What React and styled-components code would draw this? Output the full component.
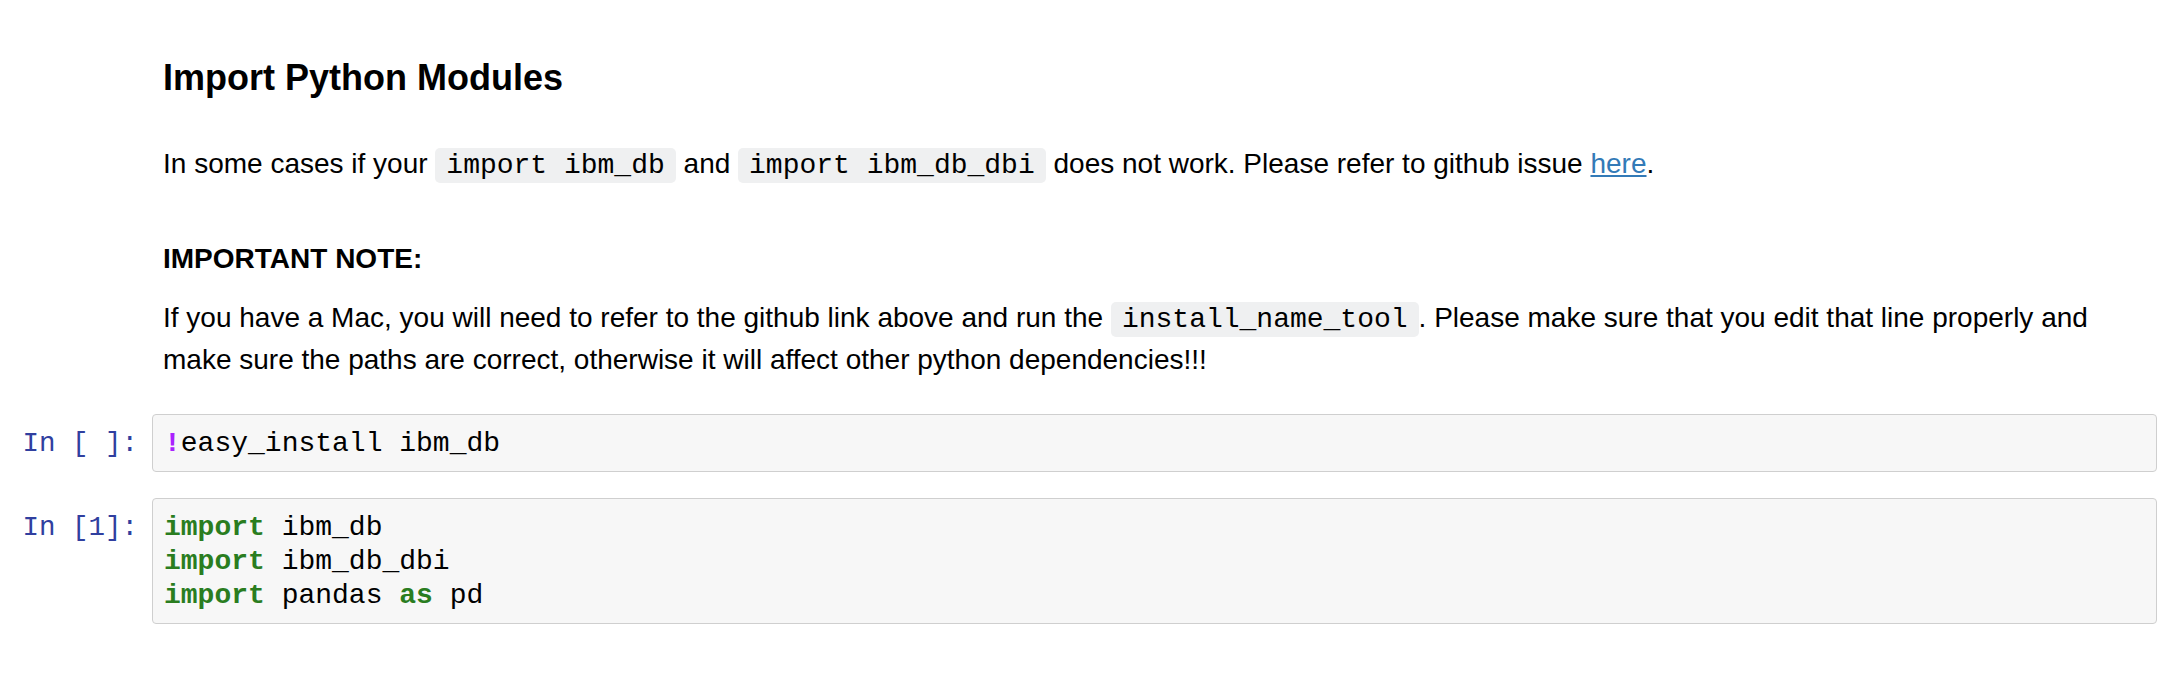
import React from 'react';
import styled, { createGlobalStyle } from 'styled-components';

const GlobalStyle = createGlobalStyle`
  html, body {
    margin: 0;
    padding: 0;
    background: #fff;
  }
  body {
    font-family: "Liberation Sans", Arial, Helvetica, sans-serif;
    color: #000;
  }
`;

const Notebook = styled.div`
  width: 2184px;
  padding: 0 27px 60px 0;
  box-sizing: border-box;
`;

const CellRow = styled.div`
  display: flex;
  align-items: flex-start;
  margin-top: ${(p) => p.$gap || 0}px;
`;

const Prompt = styled.div`
  flex: 0 0 152px;
  box-sizing: border-box;
  padding: 13px 14px 0 0;
  text-align: right;
  font-family: "Liberation Mono", "Courier New", monospace;
  font-size: 27.5px;
  line-height: 34px;
  color: #303f9f;
  white-space: pre;
`;

const Markdown = styled.div`
  flex: 1;
  min-width: 0;
  padding: 56px 11px 0 11px;
  font-size: 28px;
  line-height: 40px;
`;

const Heading = styled.h3`
  margin: 0 0 45px;
  font-size: 36px;
  line-height: 1.2;
  font-weight: bold;
`;

const SubHeading = styled.h4`
  margin: 53px 0 19px;
  font-size: 28px;
  line-height: 40px;
  font-weight: bold;
`;

const Para = styled.p`
  margin: 0;
`;

const InlineCode = styled.code`
  font-family: "Liberation Mono", "Courier New", monospace;
  font-size: 28px;
  background: #eff0f1;
  padding: 2px 11px;
  border-radius: 5px;
`;

const Link = styled.a`
  color: #337ab7;
  text-decoration: underline;
`;

const InputArea = styled.pre`
  flex: 1;
  margin: 0;
  min-width: 0;
  padding: 12px 11px 10px;
  border: 1px solid #cfcfcf;
  border-radius: 4px;
  background: #f7f7f7;
  font-family: "Liberation Mono", "Courier New", monospace;
  font-size: 28px;
  line-height: 34px;
  color: #000;
`;

const Token = styled.span`
  color: ${(p) => (p.$kind === 'keyword' ? '#2a7d1f' : p.$kind === 'operator' ? '#aa22ff' : '#000')};
  font-weight: ${(p) => (p.$kind ? 'bold' : 'normal')};
`;

const cells = [
  {
    prompt: 'In [ ]:',
    lines: [[['operator', '!'], [null, 'easy_install ibm_db']]],
  },
  {
    prompt: 'In [1]:',
    lines: [
      [['keyword', 'import'], [null, ' ibm_db']],
      [['keyword', 'import'], [null, ' ibm_db_dbi']],
      [['keyword', 'import'], [null, ' pandas '], ['keyword', 'as'], [null, ' pd']],
    ],
  },
];

const App = () => {
  return (
    <>
      <GlobalStyle />
      <Notebook>
        <CellRow>
          <Prompt />
          <Markdown>
            <Heading>Import Python Modules</Heading>
            <Para>
              In some cases if your <InlineCode>import ibm_db</InlineCode> and{' '}
              <InlineCode>import ibm_db_dbi</InlineCode> does not work. Please refer to github issue{' '}
              <Link href="#">here</Link>.
            </Para>
            <SubHeading>IMPORTANT NOTE:</SubHeading>
            <Para>
              If you have a Mac, you will need to refer to the github link above and run the{' '}
              <InlineCode>install_name_tool</InlineCode>. Please make sure that you edit that line
              properly and make sure the paths are correct, otherwise it will affect other python
              dependencies!!!
            </Para>
          </Markdown>
        </CellRow>

        {cells.map((cell, i) => (
          <CellRow key={cell.prompt} $gap={i === 0 ? 34 : 26}>
            <Prompt>{cell.prompt}</Prompt>
            <InputArea>
              {cell.lines.map((line, j) => (
                <div key={j}>
                  {line.map(([kind, text], k) => (
                    <Token key={k} $kind={kind}>
                      {text}
                    </Token>
                  ))}
                </div>
              ))}
            </InputArea>
          </CellRow>
        ))}
      </Notebook>
    </>
  );
};

export default App;
